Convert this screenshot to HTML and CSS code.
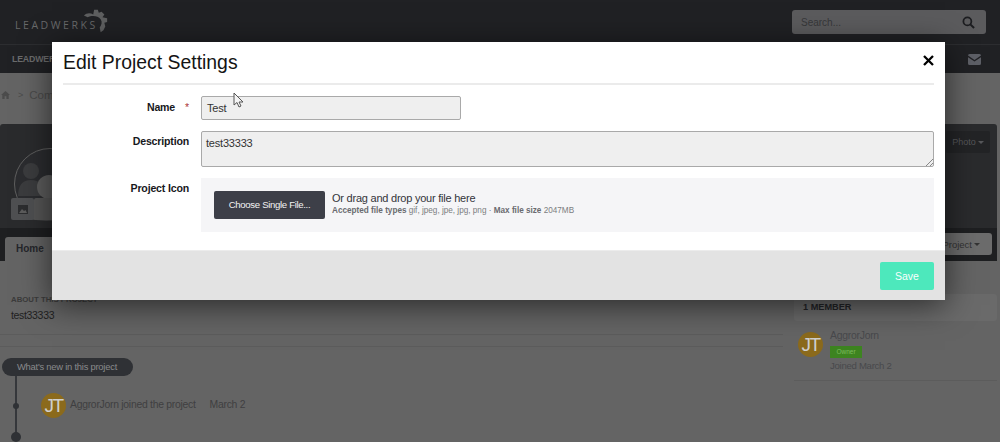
FILE: index.html
```html
<!DOCTYPE html>
<html lang="en">
<head>
<meta charset="utf-8">
<title>Edit Project Settings</title>
<link rel="stylesheet" href="styles.css">
</head>
<body>
<div class="page">
  <header class="top">
    <div class="logo">
      <span class="logo-text">LEADWERKS</span>
      <svg class="gear" viewBox="0 0 28 28" width="26" height="26"><path d="M1 8 C4 5 8 5 11 7 L12 2 L16 2 L17 5 L20 4 L23 7 L21 10 L26 11 L26 15 L23 16 L24 20 L22 24 L19 26 L18 21 C20 18 21 15 19 12 C16 8 9 8 5 10 Z" fill="#5e5f60"/></svg>
    </div>
    <div class="search">
      <span>Search...</span>
      <svg viewBox="0 0 14 14" width="13" height="13"><circle cx="5.8" cy="5.8" r="4.3" fill="none" stroke="#1c1d20" stroke-width="1.9"/><path d="M9 9 L13 13" stroke="#1c1d20" stroke-width="2.2"/></svg>
    </div>
  </header>
  <nav class="nav">
    <span class="nav-item">LEADWERKS</span>
    <svg class="mail" viewBox="0 0 13 11" width="13" height="11"><path d="M0 1.5 Q0 0 1.5 0 H11.5 Q13 0 13 1.5 L6.5 6 Z M0 3.2 V9.5 Q0 11 1.5 11 H11.5 Q13 11 13 9.5 V3.2 L6.5 7.6 Z" fill="#5d5f66"/></svg>
  </nav>
  <div class="crumbs">
    <svg viewBox="0 0 10 9" width="9" height="8"><path d="M5 0 L10 4.6 H8.6 V9 H6 V6 H4 V9 H1.4 V4.6 H0 Z" fill="#4b4b4b"/></svg>
    <span class="sep">&gt;</span>
    <span>Community</span>
  </div>
  <section class="hero">
    <div class="hero-top">
      <div class="avatar-wrap">
        <svg class="ring" viewBox="0 0 74 74" width="74" height="74"><circle cx="37" cy="36" r="35.5" fill="#2b2c2f" stroke="#5f5f5f" stroke-width="1"/><circle cx="18" cy="23" r="8" fill="#3b3c3e"/><path d="M5 48 Q5 32 18 32 Q31 32 31 48 Z" fill="#3b3c3e"/><circle cx="36" cy="39" r="12" fill="#5c5c5c"/><path d="M12 70 Q14 52 37 52 Q60 52 62 68 Q37 76 12 70 Z" fill="#5c5c5c"/></svg>
        <span class="photo-thumb"><svg viewBox="0 0 10 9" width="10" height="9"><path d="M0 0 H10 V9 H0 Z" fill="#2c2d2f"/><path d="M1 8 L4 4 L6 6 L7.5 5 L9 8 Z" fill="#5c5c5c"/></svg></span>
        <span class="photo-thumb second"></span>
      </div>
      <span class="photo-btn">Photo <i class="caret"></i></span>
    </div>
    <div class="tabs">
      <span class="tab">Home</span>
      <span class="project-btn">Project <i class="caret dark"></i></span>
    </div>
  </section>
  <div class="content">
    <main class="main">
      <div class="about">
        <h3>ABOUT THIS PROJECT</h3>
        <p>test33333</p>
      </div>
      <hr class="rule">
      <div class="feed">
        <span class="pill">What's new in this project</span>
        <div class="entry">
          <span class="user-pic">JT</span>
          <span class="entry-text">AggrorJorn joined the project</span>
          <span class="entry-text when">March 2</span>
        </div>
        <span class="dot big"></span>
        <span class="dot small"></span>
      </div>
    </main>
    <aside class="side">
      <h4>1 MEMBER</h4>
      <div class="member">
        <span class="user-pic">JT</span>
        <div class="member-info">
          <span class="member-name">AggrorJorn</span>
          <span class="badge">Owner</span>
          <span>Joined March 2</span>
        </div>
      </div>
    </aside>
  </div>
</div>

<div class="modal">
  <div class="modal-body">
    <div class="modal-head">
      <h2>Edit Project Settings</h2>
      <svg class="close" viewBox="0 0 11 11" width="11" height="11"><path d="M1 1 L10 10 M10 1 L1 10" stroke="#000" stroke-width="2.3"/></svg>
    </div>
    <div class="form">
      <label class="lbl">Name<b class="req">*</b></label>
      <div class="field-name">Test</div>
      <label class="lbl lbl-desc">Description</label>
      <div class="field-desc">test33333<svg class="grip" viewBox="0 0 8 8" width="8" height="8"><path d="M1 8 L8 1 M5 8 L8 5" stroke="#888" stroke-width="1"/></svg></div>
      <label class="lbl lbl-icon">Project Icon</label>
      <div class="upload">
        <span class="choose">Choose Single File...</span>
        <div class="upload-text">
          <span class="drag">Or drag and drop your file here</span>
          <span class="hint"><b>Accepted file types</b> gif, jpeg, jpe, jpg, png &middot; <b>Max file size</b> 2047MB</span>
        </div>
      </div>
    </div>
  </div>
  <div class="modal-foot"><span class="save">Save</span></div>
</div>

<svg class="cursor" viewBox="0 0 11 17" width="11" height="17"><path d="M1 1 V13 L4 10.5 L6 15 L8 14 L6 10 H10 Z" fill="#f4f4f4" stroke="#555" stroke-width="1"/></svg>
</body>
</html>
```
FILE: styles.css
```css
* { box-sizing: border-box; }
html, body { margin: 0; padding: 0; height: 100%; overflow: hidden; }
body { background: #646464; font-family: "Liberation Sans", Arial, sans-serif; color: #444; width: 1000px; height: 442px; position: relative; }
.page { display: flex; flex-direction: column; height: 442px; }

.top { height: 45px; flex: none; background: #202124; border-bottom: 1px solid #2c2d30; display: flex; align-items: flex-start; justify-content: space-between; padding: 10px 14px 0 14px; }
.logo { display: flex; align-items: flex-start; }
.logo-text { font-family: "Open Sans", sans-serif; font-size: 10.5px; letter-spacing: 2.55px; line-height: 12px; margin-top: 9px; margin-left: 1px; color: #68696a; }
.gear { margin-left: -15px; margin-top: -2px; }
.search { width: 194px; height: 24px; background: #5b5b5d; border-radius: 3px; display: flex; align-items: center; justify-content: space-between; padding: 0 11px 0 9px; font-size: 10px; color: #37383a; }

.nav { height: 28px; flex: none; background: #202124; display: flex; align-items: center; justify-content: space-between; padding: 0 19px 0 12px; }
.nav-item { font-size: 8.8px; font-weight: bold; color: #6a6b6c; letter-spacing: -.2px; }

.crumbs { height: 51px; flex: none; display: flex; align-items: center; padding: 0 0 8px 1px; font-size: 11.5px; color: #4a4a4a; }
.crumbs .sep { margin: 0 6px 0 8px; font-size: 9px; }

.hero { height: 137px; flex: none; margin-right: 3px; background: #2a2b2d; border-radius: 3px 3px 0 0; display: flex; flex-direction: column; }
.hero-top { height: 104px; flex: none; display: flex; justify-content: space-between; padding: 7px 7px 0 0; }
.avatar-wrap { position: relative; width: 74px; height: 74px; margin: 17px 0 0 13px; }
.ring { display: block; }
.photo-thumb { position: absolute; left: -2px; top: 50px; width: 23px; height: 22px; background: #4f5052; border-radius: 2px; display: flex; align-items: center; justify-content: center; }
.photo-thumb.second { left: 21px; width: 30px; background: #555; }
.photo-btn { width: 44px; height: 22px; background: #232426; color: #56575a; font-size: 9px; border-radius: 2px; display: flex; align-items: center; justify-content: center; gap: 2px; }
.caret { display: inline-block; border: 3px solid transparent; border-top-color: #56575a; border-bottom: 0; }
.caret.dark { border-top-color: #333; }
.tabs { flex: 1; background: #1e1f21; display: flex; justify-content: space-between; align-items: flex-start; padding: 0 5px; }
.tab { width: 60px; height: 24px; margin-top: 9px; background: #646464; color: #24262b; font-size: 10px; font-weight: bold; display: flex; align-items: center; padding: 0 0 2px 11px; border-radius: 3px 3px 0 0; }
.project-btn { width: 60px; height: 22px; margin-top: 5px; background: #6c6c6c; color: #333; font-size: 9.5px; border-radius: 3px; display: flex; align-items: center; justify-content: flex-end; gap: 2px; padding-right: 12px; }

.content { flex: 1; display: flex; justify-content: space-between; align-items: flex-start; }
.main { width: 783px; padding-top: 33px; }
.about { padding: 0 11px; height: 40px; }
.about h3 { margin: 0; font-size: 7.8px; line-height: 12px; color: #3b3b3b; }
.about p { margin: 2px 0 0; font-size: 10.5px; letter-spacing: -.33px; line-height: 15px; color: #1f1f1f; }
.rule { margin: 0; height: 13px; border: 0; border-top: 1px solid #5c5c5c; border-bottom: 1px solid #5c5c5c; }
.feed { position: relative; padding: 11px 0 0 2px; }
.feed::before { content: ""; position: absolute; left: 15px; top: 20px; width: 2px; height: 70px; background: #35373b; }
.pill { position: relative; display: block; width: 131px; height: 18px; border-radius: 9px; background: #2f3135; color: #898a8c; font-size: 9.4px; letter-spacing: -.23px; line-height: 18px; padding-left: 15px; }
.entry { display: flex; align-items: center; gap: 4px; margin: 17px 0 0 39px; font-size: 10.4px; letter-spacing: -.27px; color: #3f3f41; }
.entry-text { padding-bottom: 2px; }
.when { margin-left: 10px; }
.user-pic { width: 25px; height: 25px; border-radius: 50%; background: #8b6a1c; color: #cfcfcf; font-size: 19px; letter-spacing: -1.5px; display: flex; align-items: center; justify-content: center; flex: none; }
.dot { position: absolute; border-radius: 50%; background: #2f3135; }
.dot.small { left: 13px; top: 56px; width: 6px; height: 6px; }
.dot.big { left: 11px; top: 85px; width: 10px; height: 10px; }

.side { width: 209px; padding: 33px 3px 0 3px; }
.side h4 { margin: 0; height: 27px; background: #6a6a6a; font-size: 9.2px; line-height: 27px; padding-left: 9px; color: #222326; border-radius: 3px; }
.member { display: flex; gap: 7px; padding: 11px 4px 0; height: 60px; border-bottom: 1px solid #5c5c5c; }
.member-info { display: flex; flex-direction: column; align-items: flex-start; font-size: 9.6px; letter-spacing: -.29px; line-height: 12px; color: #48494c; margin-top: -1px; }
.member-name { font-size: 10.4px; letter-spacing: -.25px; line-height: 10px; margin-bottom: 5px; }
.badge { width: 32px; height: 12px; background: #3d8420; color: #7cbb5f; font-size: 6.5px; letter-spacing: 0; line-height: 12px; text-align: center; margin-bottom: 2px; }

.modal { position: absolute; left: 52px; top: 42px; width: 893px; height: 258px; background: #fff; box-shadow: 0 5px 30px rgba(0,0,0,.6); display: flex; flex-direction: column; }
.modal-body { flex: 1; padding: 0 11px; }
.modal-head { height: 43px; border-bottom: 2px solid #ebebeb; display: flex; align-items: flex-start; justify-content: space-between; }
.modal-head h2 { margin: 8px 0 0; font-weight: normal; font-size: 19.4px; line-height: 24px; color: #141414; }
.close { margin-top: 13px; }
.form { display: grid; grid-template-columns: 126px 1fr; column-gap: 12px; row-gap: 11px; padding-top: 11px; }
.lbl { font-size: 10.6px; letter-spacing: -.18px; font-weight: bold; color: #17181c; text-align: right; line-height: 13px; padding-top: 5px; display: block; }
.req { color: #a33; font-weight: normal; margin-left: 10px; }
.lbl-desc, .lbl-icon { padding-top: 4px; }
.field-name { width: 260px; height: 24px; background: #efefef; border: 1px solid #a9a9a9; border-radius: 2px; font-size: 11px; letter-spacing: -.2px; line-height: 22px; padding-left: 5px; color: #333; }
.field-desc { position: relative; height: 36px; background: #efefef; border: 1px solid #a9a9a9; border-radius: 2px; font-size: 11px; letter-spacing: -.2px; line-height: 14px; padding: 4px 4px; color: #333; }
.grip { position: absolute; right: 0; bottom: 0; }
.upload { height: 54px; background: #f5f5f7; display: flex; align-items: center; gap: 7px; padding: 0 0 1px 13px; }
.choose { width: 111px; height: 28px; background: #3d3f48; border-radius: 2px; color: #f2f2f2; font-size: 9.6px; letter-spacing: -.33px; line-height: 28px; text-align: center; }
.upload-text { display: flex; flex-direction: column; margin-top: -3px; }
.drag { font-size: 11px; letter-spacing: -.23px; line-height: 14px; color: #33343a; }
.hint { font-size: 8.18px; line-height: 11px; color: #7c7d80; }
.hint b { color: #6a6b6f; }
.modal-foot { height: 50px; flex: none; background: #e3e3e3; border-top: 1px solid #ececec; display: flex; justify-content: flex-end; padding: 11px 11px 0 0; }
.save { width: 54px; height: 28px; background: #4de8bc; color: #fafffd; border-radius: 2px; font-size: 10.5px; line-height: 28px; text-align: center; }
.cursor { position: absolute; left: 233px; top: 92px; }
```
